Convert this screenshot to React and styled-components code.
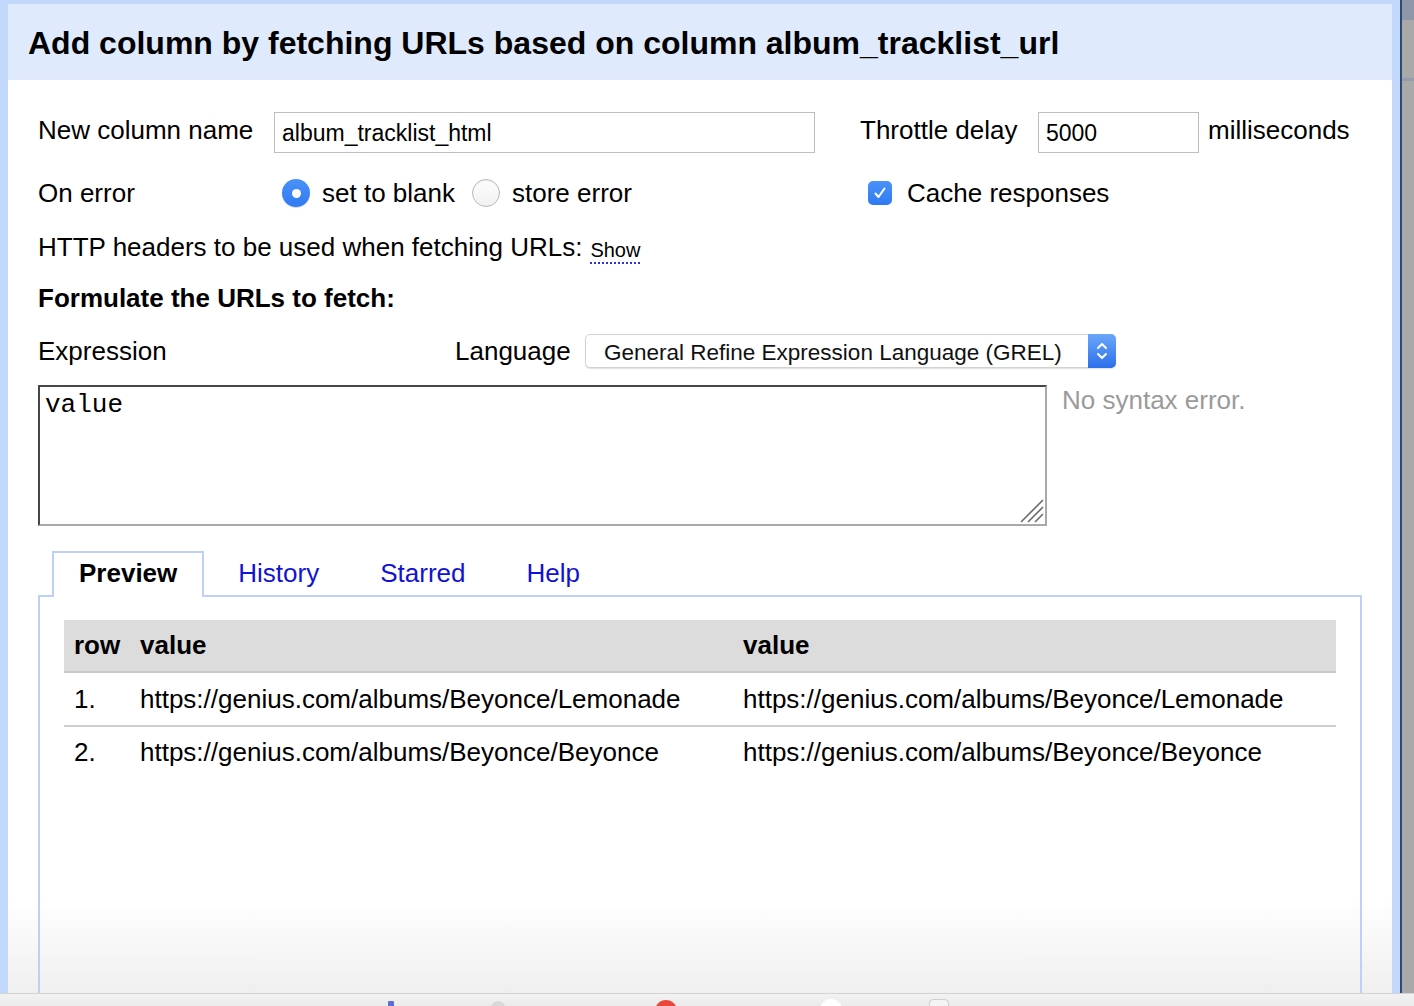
import React from "react";
import styled, { createGlobalStyle } from "styled-components";

const Global = createGlobalStyle`
  html, body { margin: 0; padding: 0; }
  body { font-family: "Liberation Sans", Arial, sans-serif; color: #000; background: #fff; }
  * { box-sizing: border-box; }
`;

const Screen = styled.div`
  width: 1414px;
  height: 1006px;
  display: flex;
  flex-direction: column;
  overflow: hidden;
`;

const Workspace = styled.div`
  flex: 1;
  display: flex;
  min-height: 0;
`;

const DialogFrame = styled.div`
  width: 1400px;
  background: #c3d9fb;
  padding: 4px 8px 0 8px;
  display: flex;
`;

const Dialog = styled.div`
  flex: 1;
  display: flex;
  flex-direction: column;
  min-width: 0;
`;

const Header = styled.div`
  height: 76px;
  background: #dfebfd;
  display: flex;
  align-items: center;
  padding-left: 20px;
  padding-top: 2px;
`;

const Title = styled.h1`
  margin: 0;
  font-size: 32px;
  font-weight: bold;
  letter-spacing: 0;
`;

const Body = styled.div`
  flex: 1;
  display: flex;
  flex-direction: column;
  padding: 0 30px;
  min-height: 0;
  background: linear-gradient(to bottom, #ffffff 0, #ffffff 820px, #efefef 913px);
`;

const Row = styled.div`
  display: flex;
  align-items: center;
  height: ${(p) => p.h || 34}px;
  margin-top: ${(p) => p.mt || 0}px;
  font-size: 26px;
`;

const Cell = styled.div`
  display: flex;
  align-items: center;
  width: ${(p) => p.w}px;
  flex: none;
  height: 100%;
  padding-left: ${(p) => p.pl || 0}px;
`;

const Label = styled.span`
  display: inline-block;
  width: ${(p) => (p.w ? `${p.w}px` : "auto")};
  flex: none;
  font-size: 26px;
  font-weight: ${(p) => (p.bold ? "bold" : "normal")};
  white-space: nowrap;
  position: relative;
  top: ${(p) => p.dy || 0}px;
`;

const TextInput = styled.div`
  width: ${(p) => p.w}px;
  height: 41px;
  border: 1px solid #bfbfbf;
  padding-left: 7px;
  display: flex;
  align-items: center;
  font-size: 23px;
  flex: none;
  padding-top: 1px;
`;

const Unit = styled.span`
  margin-left: 9px;
  font-size: 26px;
  position: relative;
  top: -2px;
`;

const Radio = styled.span`
  width: 28px;
  height: 28px;
  border-radius: 50%;
  flex: none;
  display: inline-flex;
  align-items: center;
  justify-content: center;
  margin-right: 12px;
  margin-left: ${(p) => p.ml || 0}px;
  background: ${(p) => (p.checked ? "linear-gradient(#4a92f8, #2f7af2)" : "linear-gradient(#fdfdfd, #f1f1f1)")};
  border: ${(p) => (p.checked ? "none" : "1.5px solid #b9b9b9")};
  box-shadow: ${(p) => (p.checked ? "0 1px 1px rgba(0,0,0,0.15)" : "inset 0 1px 1px rgba(0,0,0,0.06)")};
  &::after {
    content: "";
    display: ${(p) => (p.checked ? "block" : "none")};
    width: 9px;
    height: 9px;
    border-radius: 50%;
    background: #fff;
  }
`;

const Checkbox = styled.span`
  width: 24px;
  height: 24px;
  border-radius: 5px;
  background: linear-gradient(#4a92f8, #2f7af2);
  display: inline-flex;
  align-items: center;
  justify-content: center;
  margin-right: 15px;
  flex: none;
`;

const ShowLink = styled.span`
  font-size: 20px;
  margin-left: 8px;
  line-height: 22px;
  border-bottom: 2px dotted #3030d8;
  padding-bottom: 1px;
  margin-top: 8px;
`;

const Select = styled.div`
  width: 531px;
  height: 34px;
  border: 1px solid #d2d2d2;
  border-radius: 5px;
  box-shadow: 0 1px 1px rgba(0, 0, 0, 0.12);
  display: flex;
  align-items: stretch;
  background: #fff;
  flex: none;
`;

const SelectText = styled.span`
  flex: 1;
  display: flex;
  align-items: center;
  padding-left: 18px;
  padding-top: 3px;
  font-size: 22.5px;
  color: #111;
`;

const SelectArrow = styled.span`
  width: 28px;
  margin: -1px -1px -1px 0;
  border-radius: 0 5px 5px 0;
  background: linear-gradient(#6aa7fb, #2c6fea);
  display: flex;
  align-items: center;
  justify-content: center;
`;

const EditorRow = styled.div`
  display: flex;
  align-items: flex-start;
  margin-top: 17px;
`;

const EditorBox = styled.div`
  position: relative;
  width: 1009px;
  height: 141px;
  flex: none;
  border-top: 2px solid #474747;
  border-left: 2px solid #474747;
  border-right: 2px solid #a9a9a9;
  border-bottom: 2px solid #a9a9a9;
  padding: 3px 5px;
  font-family: "Liberation Mono", "Courier New", monospace;
  font-size: 26px;
  line-height: 30px;
`;

const Grip = styled.svg`
  position: absolute;
  right: 1px;
  bottom: 1px;
`;

const Status = styled.span`
  margin-left: 15px;
  font-size: 26px;
  line-height: 30px;
  color: #9a9a9a;
`;

const TabBar = styled.div`
  display: flex;
  height: 44px;
  margin-top: 25px;
  padding-left: 14px;
  align-items: flex-start;
  position: relative;
  z-index: 1;
`;

const Tab = styled.div`
  height: 46px;
  padding: 0 25px 4px 25px;
  margin-right: 7px;
  border: 2px solid ${(p) => (p.active ? "#bdd1f8" : "transparent")};
  border-bottom: none;
  background: ${(p) => (p.active ? "#fff" : "transparent")};
  display: flex;
  align-items: center;
  font-size: 26px;
  font-weight: ${(p) => (p.active ? "bold" : "normal")};
  color: ${(p) => (p.active ? "#000" : "#1212d4")};
`;

const Panel = styled.div`
  flex: 1;
  border: 2px solid #bdd1f8;
  border-bottom: none;
  padding: 23px 24px 0 24px;
  min-height: 0;
`;

const Table = styled.table`
  width: 100%;
  border-collapse: collapse;
  table-layout: fixed;
  font-size: 26px;
`;

const HeadCell = styled.th`
  background: #dcdcdc;
  height: 52px;
  text-align: left;
  padding: 0 0 0 10px;
  font-weight: bold;
  border-bottom: 2px solid #c8c8c8;
  white-space: nowrap;
`;

const DataCell = styled.td`
  height: ${(p) => (p.last ? 52 : 54)}px;
  padding: 0 0 0 10px;
  border-bottom: ${(p) => (p.last ? "none" : "2px solid #cdcdcd")};
  white-space: nowrap;
`;

const DarkLine = styled.div`
  width: 2px;
  background: #2d4b70;
`;

const GrayPane = styled.div`
  flex: 1;
  background: linear-gradient(to bottom, #8e97aa 0, #8e97aa 20px, #a9a9a9 20px, #a9a9a9 78px, #949cae 78px, #949cae 81px, #a9a9a9 81px);
`;

const Dock = styled.div`
  height: 13px;
  border-top: 1px solid #d3d3d3;
  background: linear-gradient(#f2f2f2, #ebebeb);
  display: flex;
  align-items: flex-start;
  overflow: hidden;
  padding-left: 388px;
`;

const DockItem = styled.span`
  flex: none;
  margin-left: ${(p) => p.ml}px;
  margin-top: ${(p) => p.mt || 6}px;
  width: ${(p) => p.w}px;
  height: ${(p) => p.w}px;
  border-radius: ${(p) => p.r || "50%"};
  background: ${(p) => p.bg};
  border: ${(p) => p.bd || "none"};
`;

const rows = [
  ["1.", "https://genius.com/albums/Beyonce/Lemonade"],
  ["2.", "https://genius.com/albums/Beyonce/Beyonce"],
];

export default function App() {
  return (
    <>
      <Global />
      <Screen>
        <Workspace>
          <DialogFrame>
            <Dialog>
              <Header>
                <Title>Add column by fetching URLs based on column album_tracklist_url</Title>
              </Header>
              <Body>
                <Row h={41} mt={32}>
                  <Cell w={822}>
                    <Label w={236} dy={-2}>New column name</Label>
                    <TextInput w={541}>album_tracklist_html</TextInput>
                  </Cell>
                  <Label w={178} dy={-2}>Throttle delay</Label>
                  <TextInput w={161}>5000</TextInput>
                  <Unit>milliseconds</Unit>
                </Row>
                <Row mt={23}>
                  <Cell w={822}>
                    <Label w={244}>On error</Label>
                    <Radio checked />
                    <Label>set to blank</Label>
                    <Radio ml={17} />
                    <Label>store error</Label>
                  </Cell>
                  <Cell w={400} pl={8}>
                    <Checkbox>
                      <svg width="14" height="14" viewBox="0 0 14 14">
                        <path d="M2.5 7.5 L5.5 11 L11.5 2.5" fill="none" stroke="#fff" strokeWidth="2" strokeLinecap="round" strokeLinejoin="round" />
                      </svg>
                    </Checkbox>
                    <Label>Cache responses</Label>
                  </Cell>
                </Row>
                <Row mt={20}>
                  <Label>HTTP headers to be used when fetching URLs:</Label>
                  <ShowLink>Show</ShowLink>
                </Row>
                <Row mt={17}>
                  <Label bold>Formulate the URLs to fetch:</Label>
                </Row>
                <Row mt={19}>
                  <Label w={417}>Expression</Label>
                  <Label w={130}>Language</Label>
                  <Select>
                    <SelectText>General Refine Expression Language (GREL)</SelectText>
                    <SelectArrow>
                      <svg width="14" height="24" viewBox="0 0 14 24">
                        <path d="M3 9 L7 5 L11 9" fill="none" stroke="#fff" strokeWidth="2" strokeLinecap="round" strokeLinejoin="round" />
                        <path d="M3 15 L7 19 L11 15" fill="none" stroke="#fff" strokeWidth="2" strokeLinecap="round" strokeLinejoin="round" />
                      </svg>
                    </SelectArrow>
                  </Select>
                </Row>
                <EditorRow>
                  <EditorBox>
                    value
                    <Grip width="28" height="28" viewBox="0 0 28 28">
                      <path d="M27 5 L5 27 M27 12 L12 27 M27 19 L19 27" stroke="#6a6a6a" strokeWidth="1.6" fill="none" />
                    </Grip>
                  </EditorBox>
                  <Status>No syntax error.</Status>
                </EditorRow>
                <TabBar>
                  <Tab active>Preview</Tab>
                  <Tab>History</Tab>
                  <Tab>Starred</Tab>
                  <Tab>Help</Tab>
                </TabBar>
                <Panel>
                  <Table>
                    <colgroup>
                      <col style={{ width: "66px" }} />
                      <col style={{ width: "603px" }} />
                      <col />
                    </colgroup>
                    <thead>
                      <tr>
                        <HeadCell>row</HeadCell>
                        <HeadCell>value</HeadCell>
                        <HeadCell>value</HeadCell>
                      </tr>
                    </thead>
                    <tbody>
                      {rows.map(([n, url], i) => (
                        <tr key={n}>
                          <DataCell last={i === rows.length - 1}>{n}</DataCell>
                          <DataCell last={i === rows.length - 1}>{url}</DataCell>
                          <DataCell last={i === rows.length - 1}>{url}</DataCell>
                        </tr>
                      ))}
                    </tbody>
                  </Table>
                </Panel>
              </Body>
            </Dialog>
          </DialogFrame>
          <DarkLine />
          <GrayPane />
        </Workspace>
        <Dock>
          <DockItem ml={0} w={6} bg="#5a6fd0" r="1px" mt={7} />
          <DockItem ml={97} w={14} bg="#d9d9d9" mt={7} />
          <DockItem ml={150} w={22} bg="#e8493c" />
          <DockItem ml={143} w={22} bg="#ffffff" mt={5} />
          <DockItem ml={87} w={20} bg="#f4f4f4" r="4px" bd="1px solid #cfcfcf" mt={5} />
        </Dock>
      </Screen>
    </>
  );
}
